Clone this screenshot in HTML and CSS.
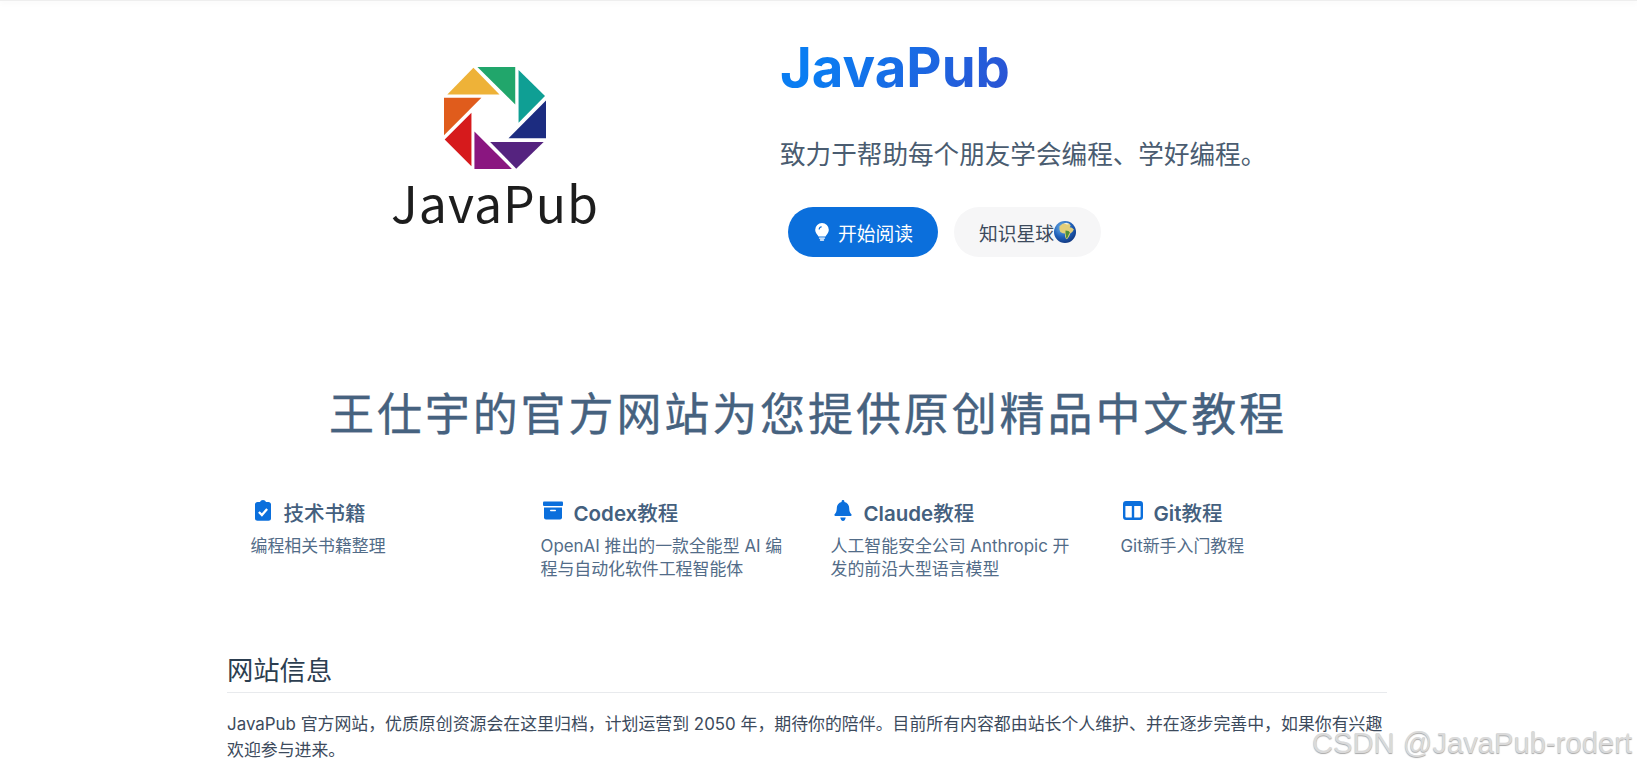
FILE: index.html
```html
<!DOCTYPE html>
<html>
<head>
  <meta charset="UTF-8" />
  <title>JavaPub</title>
  <link rel="stylesheet" href="styles.css">
</head>
<body>
  <div class="topbar"></div>

  <!-- Hero -->
  <section class="hero">
    <div class="heroLogo">
      <svg class="logoMark" viewBox="222 83 305 305">
        <polygon fill="#eeb238" points="310,85 388,165 232,165" />
        <polygon fill="#21a66b" points="322,83 435,83 435,195" />
        <polygon fill="#0f9f94" points="445,92 524,170 445,250" />
        <polygon fill="#1c2c80" points="527,183 527,296 415,296" />
        <polygon fill="#55237f" points="520,307 438,387 360,307" />
        <polygon fill="#8a1680" points="425,388 313,388 313,276" />
        <polygon fill="#d61a1c" points="304,380 224,300 304,220" />
        <polygon fill="#e05c1c" points="222,287 222,175 334,175" />
      </svg>
      <div class="logoText">JavaPub</div>
    </div>
    <div class="heroInfo">
      <h1 class="heroName"><span>JavaPub</span></h1>
      <p class="heroTagline">致力于帮助每个朋友学会编程、学好编程。</p>
      <div class="heroActions">
        <a class="btn btnBrand" href="#">
          <svg class="btnIcon" viewBox="0 0 14 18">
            <path fill="#fff" d="M7 0a6.8 6.8 0 0 0-6.8 6.8c0 2.300 1.100 3.700 2.100 4.900.6.700 1 1.300 1.100 1.900h7.200c.1-.6.500-1.200 1.100-1.900 1-1.200 2.100-2.600 2.100-4.900A6.800 6.800 0 0 0 7 0z" />
            <path fill="#0b6fdc" d="M3.600 6.600a3.400 3.400 0 0 1 3-3.400l.2 1.100a2.300 2.300 0 0 0-2.100 2.300z" />
            <rect fill="#fff" x="3.900" y="14.400" width="6.200" height="1.300" rx=".6" />
            <rect fill="#fff" x="4.800" y="16.300" width="4.400" height="1.500" rx=".7" />
          </svg>
          开始阅读
        </a>
        <a class="btn btnAlt" href="#">
          知识星球<svg class="globe" viewBox="0 0 22 22">
            <defs>
              <radialGradient id="sea" cx="0.38" cy="0.3" r="0.8">
                <stop offset="0" stop-color="#6fb4ea" />
                <stop offset="0.55" stop-color="#1f5fb8" />
                <stop offset="1" stop-color="#0f2f73" />
              </radialGradient>
            </defs>
            <circle cx="11" cy="11" r="11" fill="url(#sea)" />
            <path fill="#e3cf7a" d="M5.500 5.200l3-2.400 3.800-.8 3 .8 1.400 1.600-1 1.800 2.200.6 2 1.800-1.600 2.400-2 1.400-1 2.600-1.600 2.600-1.600.6-1-2.600-.2-3-2.200-.4-2.400-1.200-.8-2.600z" />
            <path fill="#4f8f3a" d="M11.500 9.500l3 .4 1.400 1.600-1.400 2.400-.8 2.400-1.400 1.400-.4-3-.4-2.400z" />
            <path fill="#fff" fill-opacity="0.75" d="M9.500 2.300l3-.6 3 1.200-2.400.6z" />
          </svg>
        </a>
      </div>
    </div>
  </section>

  <h2 class="slogan">王仕宇的官方网站为您提供原创精品中文教程</h2>

  <!-- Features -->
  <section class="features">
    <div class="featureItem">
      <div class="featureTitle">
        <svg class="featureIcon" viewBox="0 0 16 21">
          <path fill="#0b6fdc" d="M5 1.900C5.500.8 6.600 0 8 0s2.500.8 3 1.900h2.500c1.300 0 2.500 1 2.500 2.300v14.300c0 1.300-1.200 2.300-2.500 2.300h-11C1.200 20.800 0 19.800 0 18.500V4.200C0 2.900 1.200 1.900 2.500 1.900z" />
          <path fill="none" stroke="#fff" stroke-width="2.300" d="M3.900 12l3 3 5.200-6" />
        </svg>
        <span>技术书籍</span>
      </div>
      <p class="featureDesc">编程相关书籍整理</p>
    </div>
    <div class="featureItem">
      <div class="featureTitle">
        <svg class="featureIcon featureIconWide" viewBox="0 0 20 18">
          <rect fill="#0b6fdc" x="0" y="0" width="20" height="4.600" rx="1" />
          <path fill="#0b6fdc" d="M1 6h18v10a2 2 0 0 1-2 2H3a2 2 0 0 1-2-2z" />
          <rect fill="#fff" x="7" y="8.200" width="6" height="1.500" rx=".7" />
        </svg>
        <span><b>Codex</b>教程</span>
      </div>
      <p class="featureDesc">OpenAI 推出的一款全能型 AI 编程与自动化软件工程智能体</p>
    </div>
    <div class="featureItem">
      <div class="featureTitle">
        <svg class="featureIcon featureIconWide" viewBox="0 0 18 21">
          <path fill="#0b6fdc" d="M9 0c.8 0 1.400.6 1.400 1.400v.5c3 .6 4.800 3.100 4.800 6.100 0 3.300.9 4.900 2.300 6.600.4.500.1 1.400-.7 1.400H1.200c-.8 0-1.100-.9-.7-1.400C1.900 12.900 2.800 11.300 2.800 8c0-3 1.800-5.500 4.800-6.100v-.5C7.600.6 8.200 0 9 0z" />
          <path fill="#0b6fdc" d="M6.300 17.600h5.400C11.500 19.500 10.400 21 9 21s-2.500-1.500-2.700-3.400z" />
        </svg>
        <span><b>Claude</b>教程</span>
      </div>
      <p class="featureDesc">人工智能安全公司 Anthropic 开发的前沿大型语言模型</p>
    </div>
    <div class="featureItem">
      <div class="featureTitle">
        <svg class="featureIcon featureIconWide" viewBox="0 0 20 19">
          <path fill="#0b6fdc" fill-rule="evenodd" d="M3 0h14a3 3 0 0 1 3 3v13a3 3 0 0 1-3 3H3a3 3 0 0 1-3-3V3a3 3 0 0 1 3-3zm-.6 5v10.400c0 .7.500 1.200 1.200 1.200h5.200V5zm8.800 0v11.600h5.200c.7 0 1.200-.5 1.200-1.200V5z" />
        </svg>
        <span><b>Git</b>教程</span>
      </div>
      <p class="featureDesc">Git新手入门教程</p>
    </div>
  </section>

  <!-- Site info -->
  <section class="siteInfo">
    <h2 class="siteInfoTitle">网站信息</h2>
    <p class="siteInfoText">JavaPub 官方网站，优质原创资源会在这里归档，计划运营到 2050 年，期待你的陪伴。目前所有内容都由站长个人维护、并在逐步完善中，如果你有兴趣欢迎参与进来。</p>
  </section>

  <div class="watermark">CSDN @JavaPub-rodert</div>
</body>
</html>
```

FILE: styles.css
```css
html {
  overflow: hidden;
}

body {
  margin: 0;
  height: 771px;
  overflow: hidden;
  position: relative;
  background-color: #fff;
  font-family: Inter, 'Noto Sans CJK SC', sans-serif;
  color: #3c4a5c;
}

p,
h1,
h2 {
  margin: 0;
}

a {
  text-decoration: none;
}

.topbar {
  height: 1px;
  background-color: #eee;
  box-shadow: 0 1px 6px rgba(0, 0, 0, 0.12);
}

/* Hero */
.hero {
  display: flex;
  width: 1160px;
  margin-left: 227px;
  padding-top: 36px;
  height: 248px;
}

.heroLogo {
  width: 536px;
  padding-top: 30px;
  display: flex;
  flex-direction: column;
  align-items: center;
}

.logoMark {
  display: block;
  width: 102px;
  height: 102px;
}

.logoText {
  margin-top: 2px;
  font-family: 'Noto Sans CJK SC', sans-serif;
  font-weight: 400;
  font-size: 50px;
  line-height: 60px;
  letter-spacing: 1px;
  color: #1d1d1d;
}

.heroInfo {
  padding-left: 17px;
}

.heroName {
  font-size: 54.5px;
  line-height: 60px;
  font-weight: 700;
}

.heroName span {
  background: linear-gradient(120deg, #0a7df2 20%, #2d52d2);
  -webkit-background-clip: text;
  background-clip: text;
  color: transparent;
}

.heroTagline {
  margin-top: 40px;
  font-size: 25.6px;
  line-height: 36px;
  color: #4a5c70;
}

.heroActions {
  display: flex;
  gap: 16px;
  margin: 34px 0 0 8px;
}

.btn {
  display: flex;
  align-items: center;
  height: 50px;
  border-radius: 25px;
  font-size: 18.8px;
}

.btnBrand {
  width: 150px;
  padding-left: 27px;
  box-sizing: border-box;
  background-color: #0b6fdc;
  color: #fff;
}

.btnIcon {
  width: 14px;
  height: 18px;
  margin-right: 9px;
}

.btnAlt {
  width: 147px;
  padding-left: 25px;
  box-sizing: border-box;
  background-color: #f6f6f7;
  color: #3c4a5c;
}

.globe {
  width: 22px;
  height: 22px;
}

/* Slogan */
.slogan {
  margin-top: 99px;
  padding-right: 21px;
  text-align: center;
  font-size: 45px;
  line-height: 62px;
  font-weight: 400;
  letter-spacing: 2.9px;
  color: #46627f;
  -webkit-text-stroke: 0.4px #46627f;
}

/* Features */
.features {
  display: grid;
  grid-template-columns: repeat(4, 290px);
  width: 1160px;
  margin: 51px auto 0;
  padding-left: 24px;
}

.featureItem {
  padding-right: 40px;
}

.featureTitle {
  display: flex;
  align-items: center;
  height: 30px;
  font-size: 20.5px;
  font-weight: 500;
  color: #44607e;
}

.featureTitle b {
  font-weight: 600;
}

.featureIcon {
  width: 16px;
  height: 21px;
  margin: -4px 13px 0 4px;
}

.featureIconWide {
  width: 20px;
  margin: -4px 11px 0 2px;
}

.featureDesc {
  margin-top: 7.5px;
  font-size: 16.9px;
  line-height: 23px;
  color: #526c88;
}

/* Site info */
.siteInfo {
  width: 1160px;
  margin: 72px 0 0 227px;
}

.siteInfoTitle {
  padding-bottom: 4px;
  border-bottom: 1px solid #e8eaed;
  font-size: 26.3px;
  line-height: 35px;
  font-weight: 400;
  color: #2c3e50;
}

.siteInfoText {
  margin-top: 18px;
  font-size: 16.9px;
  line-height: 26.5px;
  color: #3c4a5c;
}

/* Overlay on the screenshot */
.watermark {
  position: absolute;
  right: 5px;
  top: 726px;
  font-family: 'Liberation Sans', sans-serif;
  font-size: 29.200px;
  line-height: 34px;
  white-space: nowrap;
  color: #dadada;
  text-shadow: 0 1px 1px #a8a8a8;
}
```
